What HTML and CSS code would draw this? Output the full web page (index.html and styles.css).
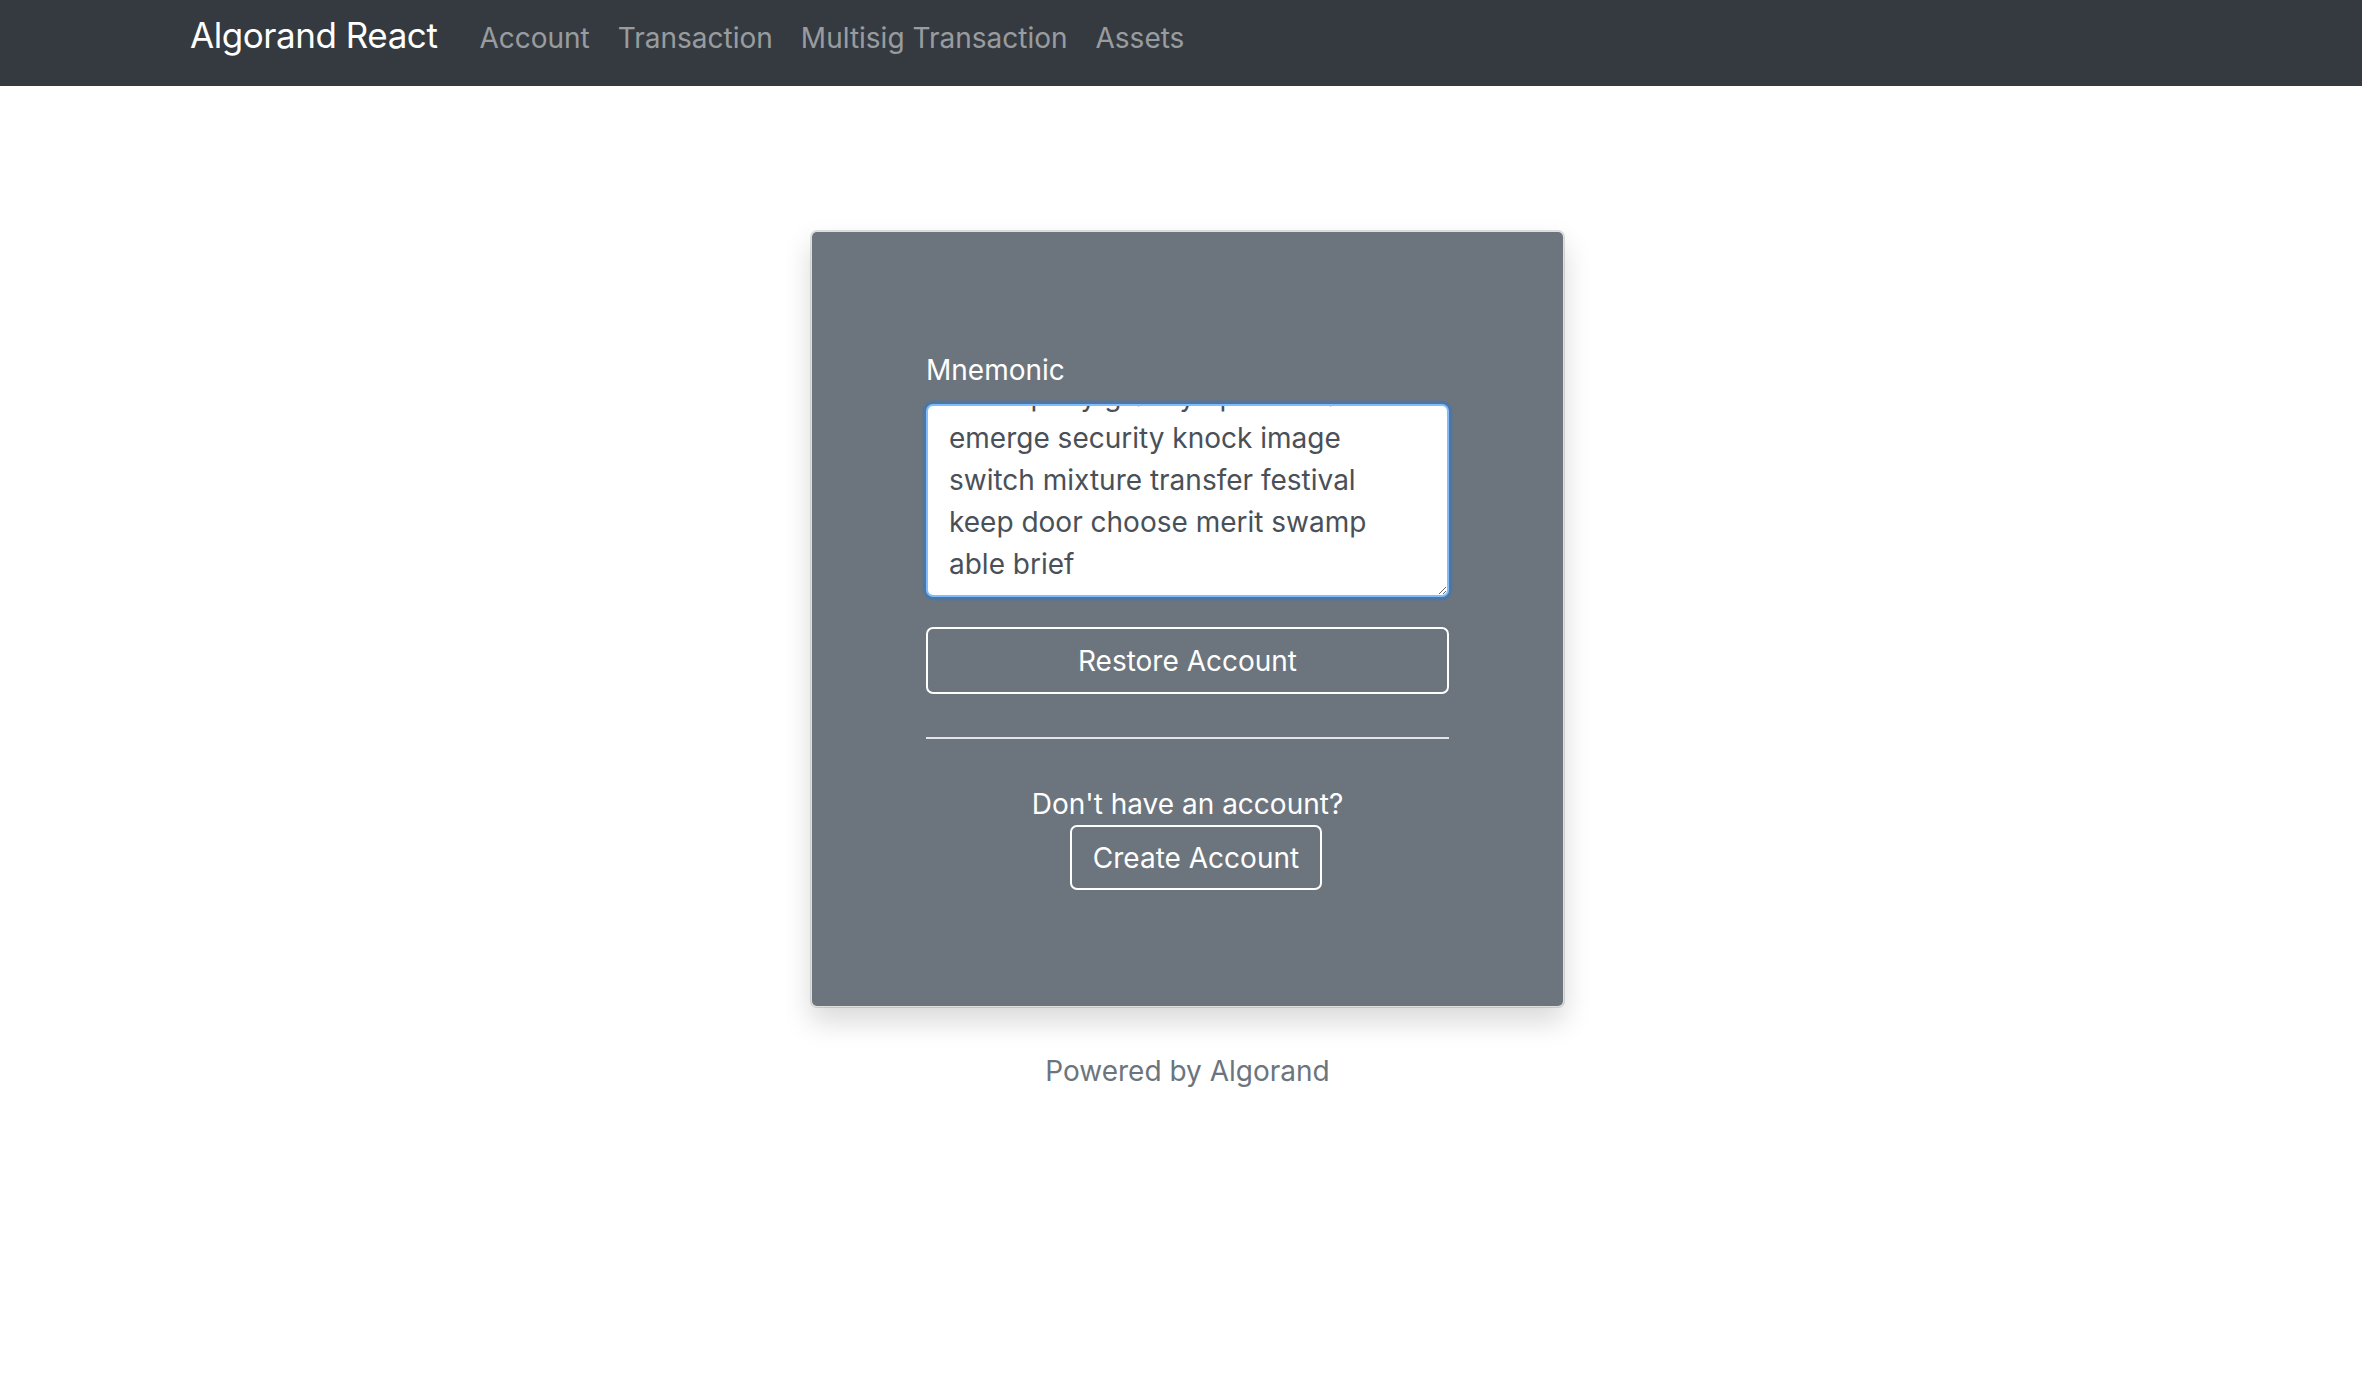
FILE: index.html
```html
<!DOCTYPE html>
<html lang="en">
<head>
<meta charset="utf-8">
<title>Algorand React</title>
<link rel="stylesheet" href="styles.css">
</head>
<body>
<nav class="navbar">
  <div class="nav-container">
    <a class="brand" href="#">Algorand React</a>
    <a class="nav-link" href="#">Account</a>
    <a class="nav-link" href="#">Transaction</a>
    <a class="nav-link" href="#">Multisig Transaction</a>
    <a class="nav-link" href="#">Assets</a>
  </div>
</nav>
<main class="main">
  <div class="card">
    <form class="form">
      <label class="label" for="mnemonic">Mnemonic</label>
      <textarea id="mnemonic" class="textarea is-focused" rows="4">crater elbow tissue cactus rural noble pony gravity upset wealth emerge security knock image switch mixture transfer festival keep door choose merit swamp able brief</textarea>
      <button type="button" class="btn btn-block">Restore Account</button>
    </form>
    <hr class="divider">
    <div class="signup">
      <p class="signup-text">Don't have an account?</p>
      <button type="button" class="btn btn-create">Create Account</button>
    </div>
  </div>
  <p class="footer">Powered by Algorand</p>
</main>
<script src="app.js"></script>
</body>
</html>
```

FILE: styles.css
```css
* { box-sizing: border-box; }

body {
  margin: 0;
  font-family: Inter, "Liberation Sans", sans-serif;
  font-size: 28px;
  line-height: 1.5;
  color: #212529;
  background: #fff;
}

.navbar {
  height: 86px;
  background: #343a40;
  padding-top: 9px;
}

.nav-container {
  width: 1982px;
  margin: 0 auto;
  display: flex;
  align-items: baseline;
}

.brand {
  font-size: 35px;
  line-height: 52px;
  letter-spacing: -0.45px;
  color: #fff;
  text-decoration: none;
  margin-right: 28px;
}

.nav-link {
  color: rgba(255, 255, 255, 0.5);
  text-decoration: none;
  padding: 0 14px;
}

.main {
  display: flex;
  flex-direction: column;
  align-items: center;
  padding-left: 13px;
}

.card {
  margin-top: 144px;
  width: 755px;
  background: #6c757d;
  background-clip: padding-box;
  border: 2px solid rgba(0, 0, 0, 0.125);
  border-radius: 7px;
  padding: 117px 114px 116px;
  color: #fff;
  box-shadow: 0 14px 28px rgba(0, 0, 0, 0.15);
}

.form {
  display: flex;
  flex-direction: column;
}

.label {
  display: block;
  margin-bottom: 13px;
}

.textarea {
  display: block;
  width: 100%;
  height: 193px;
  font: inherit;
  line-height: 42px;
  color: #495057;
  background: #fff;
  border: 2px solid #ced4da;
  border-radius: 7px;
  padding: 10px 20px 10px 21px;
  overflow: hidden;
  resize: vertical;
  outline: none;
}

.textarea.is-focused {
  border-color: #80bdff;
  box-shadow: 0 0 0 3.5px rgba(0, 123, 255, 0.25);
}

.btn {
  font: inherit;
  line-height: 42px;
  color: #fff;
  background: transparent;
  border: 2px solid #fff;
  border-radius: 7px;
  cursor: pointer;
}

.btn-block {
  width: 100%;
  margin-top: 30px;
  padding: 10.5px 21px;
}

.divider {
  margin: 43px 0 44px;
  border: 0;
  border-top: 2px solid #e3e5e8;
}

.signup {
  display: flex;
  flex-direction: column;
  align-items: center;
}

.signup-text {
  margin: 0;
}

.btn-create {
  padding: 9.5px 21px;
  margin-left: 17px;
}

.footer {
  margin: 42px 0 0;
  color: #6c757d;
  text-align: center;
}
```

FILE: app.js
```js
var ta = document.getElementById('mnemonic');
ta.scrollTop = ta.scrollHeight;
```
